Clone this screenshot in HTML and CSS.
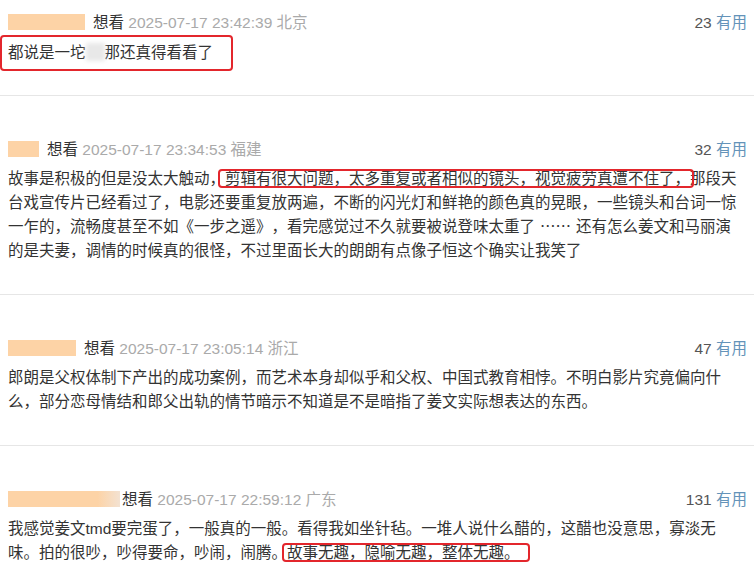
FILE: index.html
```html
<!DOCTYPE html>
<html lang="zh-CN">
  <head>
    <meta charset="utf-8" />
    <title>短评</title>
    <meta name="viewport" content="width=device-width, initial-scale=1.0" />
    <link rel="stylesheet" href="styles.css">
  </head>

  <body>
    <main class="comments">

      <div class="comment first">
        <div class="meta">
          <div>
            <span class="mask w77"></span><span class="status">想看</span>
            <span class="time">2025-07-17 23:42:39 北京</span>
          </div>
          <div class="votes">23 <span class="useful">有用</span></div>
        </div>
        <div class="content">
          <span class="boxed">都说是一坨<span class="blurred"></span>那还真得看看了</span>
        </div>
      </div>

      <div class="comment">
        <div class="meta">
          <div>
            <span class="mask w31"></span><span class="status">想看</span>
            <span class="time">2025-07-17 23:34:53 福建</span>
          </div>
          <div class="votes">32 <span class="useful">有用</span></div>
        </div>
        <p class="content">故事是积极的但是没太大触动，<span class="mark mark-a">剪辑有很大问题，太多重复或者相似的镜头，视觉疲劳真遭不住了，</span>那段天台戏宣传片已经看过了，电影还要重复放两遍，不断的闪光灯和鲜艳的颜色真的晃眼，一些镜头和台词一惊一乍的，流畅度甚至不如《一步之遥》，看完感觉过不久就要被说登味太重了<span class="dots">……</span>还有怎么姜文和马丽演的是夫妻，调情的时候真的很怪，不过里面长大的朗朗有点像子恒这个确实让我笑了</p>
      </div>

      <div class="comment">
        <div class="meta">
          <div>
            <span class="mask w68"></span><span class="status">想看</span>
            <span class="time">2025-07-17 23:05:14 浙江</span>
          </div>
          <div class="votes">47 <span class="useful">有用</span></div>
        </div>
        <p class="content">郎朗是父权体制下产出的成功案例，而艺术本身却似乎和父权、中国式教育相悖。不明白影片究竟偏向什么，部分恋母情结和郎父出轨的情节暗示不知道是不是暗指了姜文实际想表达的东西。</p>
      </div>

      <div class="comment">
        <div class="meta">
          <div>
            <span class="mask w112"></span><span class="status">想看</span>
            <span class="time">2025-07-17 22:59:12 广东</span>
          </div>
          <div class="votes">131 <span class="useful">有用</span></div>
        </div>
        <p class="content">我感觉姜文tmd要完蛋了，一般真的一般。看得我如坐针毡。一堆人说什么醋的，这醋也没意思，寡淡无味。拍的很吵，吵得要命，吵闹，闹腾。<span class="mark mark-b">故事无趣，隐喻无趣，整体无趣。</span></p>
      </div>

    </main>
  </body>
</html>
```

FILE: styles.css
```css
*,
*::before,
*::after {
  box-sizing: border-box;
}

* {
  margin: 0;
}

body {
  background: #fff;
  color: #333;
  font-family: "Liberation Sans", Arial, "Noto Sans CJK SC", sans-serif;
  font-size: 15.5px;
  text-spacing-trim: space-all;
}

.comments {
  width: 754px;
}

.comment {
  padding: 43px 7px 32px 8px;
  border-bottom: 1px solid #e6e6e6;
}

.comment.first {
  padding-top: 12px;
  padding-bottom: 24px;
}

.meta {
  display: flex;
  justify-content: space-between;
  align-items: center;
  height: 22px;
  line-height: 22px;
}

.mask {
  display: inline-block;
  height: 16px;
  vertical-align: -2px;
  margin-right: 8px;
  background: #fdd3a6;
}

.w31 { width: 31px; }
.w68 { width: 68px; }
.w77 { width: 77px; }
.w112 {
  width: 112px;
  margin-right: 2px;
  background: linear-gradient(to right, #fdd3a6 80%, #f3e2d2);
}

.status {
  color: #333;
}

.time {
  color: #aaa;
}

.votes {
  color: #555;
}

.useful {
  color: #6493b9;
}

.content {
  margin-top: 6px;
  margin-right: 3px;
  line-height: 23.5px;
}

.first .content {
  margin-top: 1px;
}

.boxed {
  display: inline-block;
  margin-left: -8px;
  padding: 4px 18px 4px 6px;
  line-height: 24px;
  border: 2px solid #e3262c;
  border-radius: 4px;
}

.blurred {
  display: inline-block;
  width: 19px;
  height: 18px;
  vertical-align: -3px;
  background: #e8e8e8;
  filter: blur(2px);
}

.dots {
  font-family: "Noto Sans CJK SC", sans-serif;
  padding: 0 5px;
}

/* red outline drawn over the quoted part, keeps text flow untouched */
.mark {
  position: relative;
}

.mark::after {
  content: "";
  position: absolute;
  top: -1px;
  bottom: -1px;
  border: 2px solid #e3262c;
  border-radius: 4px;
}

.mark-a::after {
  left: -7px;
  right: -4px;
}

.mark-b::after {
  left: -5px;
  right: -10px;
}
```
